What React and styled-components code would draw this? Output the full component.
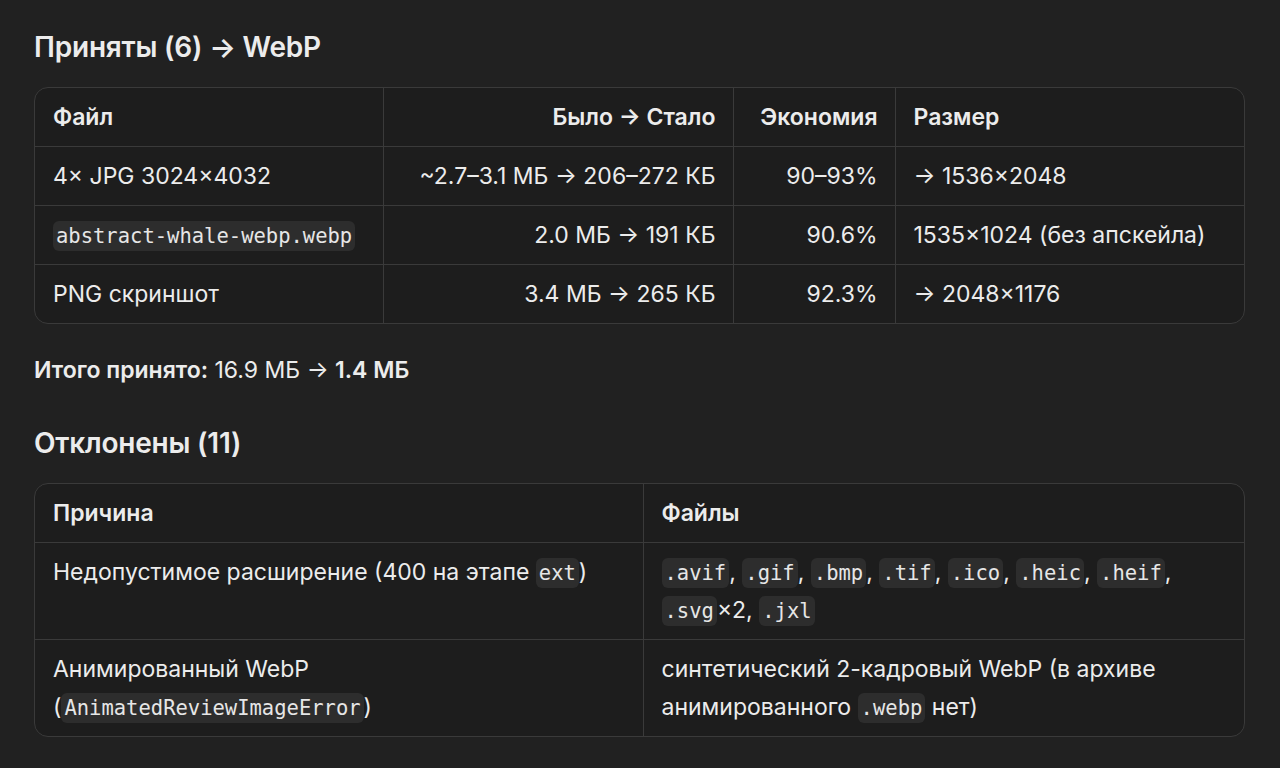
import React from 'react';
import styled, { createGlobalStyle } from 'styled-components';

const GlobalStyle = createGlobalStyle`
  html, body {
    margin: 0;
    padding: 0;
    background: #212121;
  }
  body {
    font-family: Inter, "Noto Sans", sans-serif;
    color: #ececec;
    -webkit-font-smoothing: antialiased;
  }
`;

const accepted = [
  { file: '4× JPG 3024×4032', size: '~2.7–3.1 МБ → 206–272 КБ', save: '90–93%', dims: '→ 1536×2048' },
  { file: 'abstract-whale-webp.webp', code: true, size: '2.0 МБ → 191 КБ', save: '90.6%', dims: '1535×1024 (без апскейла)' },
  { file: 'PNG скриншот', size: '3.4 МБ → 265 КБ', save: '92.3%', dims: '→ 2048×1176' },
];

const extensions = ['.avif', '.gif', '.bmp', '.tif', '.ico', '.heic', '.heif'];

const App = () => {
  return (
    <Page>
      <GlobalStyle />
      <Heading>Приняты (6) → WebP</Heading>
      <TableFrame>
        <Table>
          <colgroup>
            <col style={{ width: 348 }} />
            <col style={{ width: 350 }} />
            <col style={{ width: 162 }} />
            <col />
          </colgroup>
          <thead>
            <tr>
              <Th>Файл</Th>
              <Th $right>Было → Стало</Th>
              <Th $right>Экономия</Th>
              <Th>Размер</Th>
            </tr>
          </thead>
          <tbody>
            {accepted.map(row => (
              <tr key={row.file}>
                <Td>{row.code ? <Code>{row.file}</Code> : row.file}</Td>
                <Td $right>{row.size}</Td>
                <Td $right>{row.save}</Td>
                <Td>{row.dims}</Td>
              </tr>
            ))}
          </tbody>
        </Table>
      </TableFrame>

      <Summary>
        <strong>Итого принято:</strong> 16.9 МБ → <strong>1.4 МБ</strong>
      </Summary>

      <Heading>Отклонены (11)</Heading>
      <TableFrame>
        <Table>
          <colgroup>
            <col style={{ width: 608 }} />
            <col />
          </colgroup>
          <thead>
            <tr>
              <Th>Причина</Th>
              <Th>Файлы</Th>
            </tr>
          </thead>
          <tbody>
            <tr>
              <Td>
                Недопустимое расширение (400 на этапе <Code>ext</Code>)
              </Td>
              <Td>
                {extensions.map(ext => (
                  <React.Fragment key={ext}>
                    <Code>{ext}</Code>,{' '}
                  </React.Fragment>
                ))}
                <Code>.svg</Code>×2, <Code>.jxl</Code>
              </Td>
            </tr>
            <tr>
              <Td>
                Анимированный WebP
                <br />
                (<Code>AnimatedReviewImageError</Code>)
              </Td>
              <Td>
                синтетический 2-кадровый WebP (в архиве анимированного <Code>.webp</Code> нет)
              </Td>
            </tr>
          </tbody>
        </Table>
      </TableFrame>
    </Page>
  );
};

export default App;

const Page = styled.div`
  padding: 26px 35px 30px 34px;
`;

const Heading = styled.h2`
  margin: 0 0 19px;
  font-size: 28px;
  font-weight: 600;
  line-height: 42px;
  letter-spacing: -0.2px;
  color: #ececec;
`;

const TableFrame = styled.div`
  border: 1px solid #3a3a3a;
  border-radius: 14px;
  overflow: hidden;
  background: #1d1d1d;
`;

const Table = styled.table`
  width: 100%;
  border-collapse: collapse;
  table-layout: fixed;
  font-size: 23px;
  line-height: 38px;
`;

const Th = styled.th`
  padding: 10px 17px 10px 18px;
  font-weight: 600;
  text-align: ${props => (props.$right ? 'right' : 'left')};
  border-bottom: 1px solid #3a3a3a;
  border-right: 1px solid #3a3a3a;
  &:last-child {
    border-right: none;
  }
`;

const Td = styled.td`
  padding: 10px 17px 10px 18px;
  vertical-align: top;
  text-align: ${props => (props.$right ? 'right' : 'left')};
  border-bottom: 1px solid #3a3a3a;
  border-right: 1px solid #3a3a3a;
  &:last-child {
    border-right: none;
  }
  tr:last-child > & {
    border-bottom: none;
  }
`;

const Code = styled.code`
  font-family: "DejaVu Sans Mono", "Liberation Mono", monospace;
  font-size: 20.5px;
  line-height: 1;
  background: #2d2d2d;
  border-radius: 6px;
  padding: 3px 3px;
  color: #e6e6e6;
`;

const Summary = styled.p`
  margin: 26px 0 32px;
  font-size: 23px;
  line-height: 40px;
  strong {
    font-weight: 600;
  }
`;
